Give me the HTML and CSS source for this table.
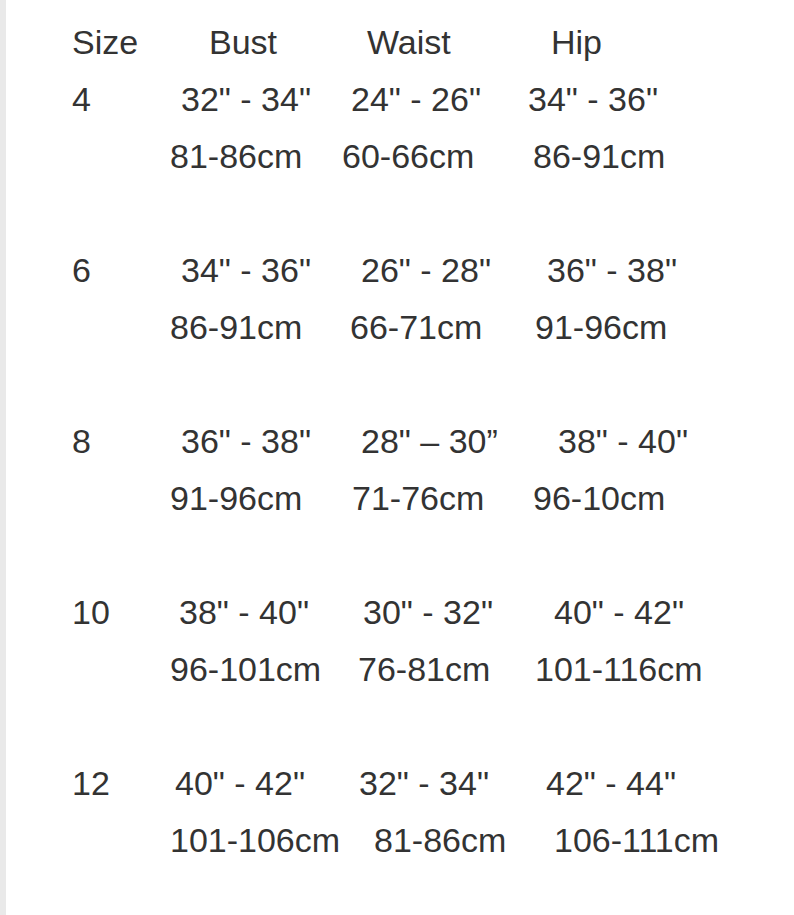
FILE: index.html
```html
<!DOCTYPE html>
<html lang="en">
<head>
<meta charset="utf-8">
<title>Size chart</title>
<link rel="stylesheet" href="styles.css">
</head>
<body>
<main class="chart">
  <div class="line r-head"><span>Size</span><span>Bust</span><span>Waist</span><span>Hip</span></div>
  <section class="group">
    <div class="line r4"><span>4</span><span>32" - 34"</span><span>24" - 26"</span><span>34" - 36"</span></div>
    <div class="line c4"><span></span><span>81-86cm</span><span>60-66cm</span><span>86-91cm</span></div>
  </section>
  <section class="group">
    <div class="line r6"><span>6</span><span>34" - 36"</span><span>26" - 28"</span><span>36" - 38"</span></div>
    <div class="line c6"><span></span><span>86-91cm</span><span>66-71cm</span><span>91-96cm</span></div>
  </section>
  <section class="group">
    <div class="line r8"><span>8</span><span>36" - 38"</span><span>28" – 30”</span><span>38" - 40"</span></div>
    <div class="line c8"><span></span><span>91-96cm</span><span>71-76cm</span><span>96-10cm</span></div>
  </section>
  <section class="group">
    <div class="line r10"><span>10</span><span>38" - 40"</span><span>30" - 32"</span><span>40" - 42"</span></div>
    <div class="line c10"><span></span><span>96-101cm</span><span>76-81cm</span><span>101-116cm</span></div>
  </section>
  <section class="group">
    <div class="line r12"><span>12</span><span>40" - 42"</span><span>32" - 34"</span><span>42" - 44"</span></div>
    <div class="line c12"><span></span><span>101-106cm</span><span>81-86cm</span><span>106-111cm</span></div>
  </section>
</main>
</body>
</html>
```
FILE: styles.css
```css
html, body {
  margin: 0;
  padding: 0;
  background: #ffffff;
}

body {
  min-height: 915px;
  border-left: 6px solid #e9e9e9;
  box-sizing: border-box;
  font-family: "Liberation Sans", Arial, sans-serif;
  font-size: 34px;
  color: #333333;
}

.chart {
  padding: 14px 0 0 66px;
}

.line {
  display: grid;
  height: 57px;
  line-height: 57px;
  white-space: nowrap;
}

.line span {
  display: block;
}

.group {
  padding-bottom: 57px;
}

.r-head { grid-template-columns: 137px 158px 184px auto; }
.r4     { grid-template-columns: 109px 170px 177px auto; }
.c4     { grid-template-columns: 98px 172px 191px auto; }
.r6     { grid-template-columns: 109px 180px 186px auto; }
.c6     { grid-template-columns: 98px 180px 185px auto; }
.r8     { grid-template-columns: 109px 180px 197px auto; }
.c8     { grid-template-columns: 98px 182px 181px auto; }
.r10    { grid-template-columns: 107px 184px 191px auto; }
.c10    { grid-template-columns: 98px 188px 177px auto; }
.r12    { grid-template-columns: 103px 184px 187px auto; }
.c12    { grid-template-columns: 98px 204px 180px auto; }
```
